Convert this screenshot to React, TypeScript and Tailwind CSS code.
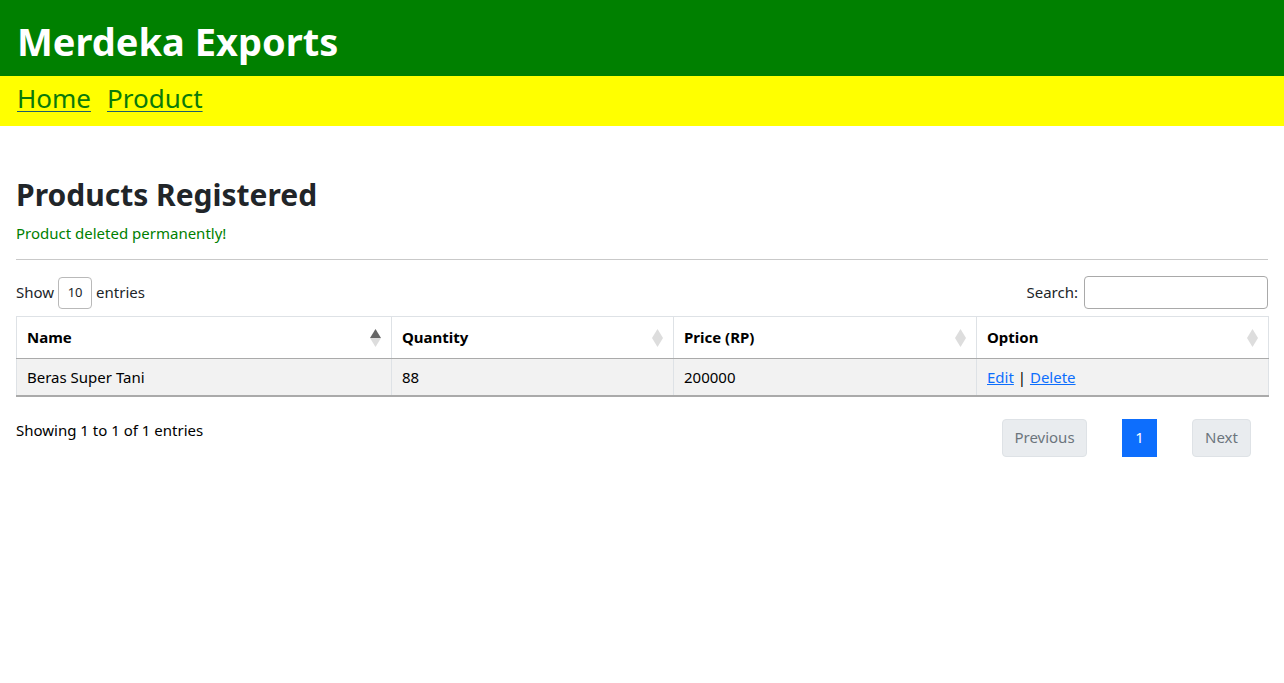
const font = { fontFamily: '"Noto Sans", "Segoe UI", sans-serif' };

function SortIcon({ active = false }: { active?: boolean }) {
  return (
    <span className="absolute right-[10px] top-1/2 flex -translate-y-1/2 flex-col items-center">
      <svg width="11" height="9" viewBox="0 0 11 9" className="block">
        <path d="M5.5 0 L11 9 L0 9 Z" fill={active ? '#666666' : '#dddddd'} />
      </svg>
      <svg width="11" height="9" viewBox="0 0 11 9" className="block">
        <path d="M0 0 L11 0 L5.5 9 Z" fill="#dddddd" />
      </svg>
    </span>
  );
}

const columns = [
  { label: 'Name', width: 'w-[375px]', active: true },
  { label: 'Quantity', width: 'w-[282px]' },
  { label: 'Price (RP)', width: 'w-[303px]' },
  { label: 'Option', width: 'w-[292px]' },
];

export default function App() {
  return (
    <div className="min-h-[683px] bg-white text-[#212529]" style={font}>
      <header className="flex h-[76px] items-center bg-[#008000] px-[17px] pt-[6px]">
        <h1 className="text-[38px] font-bold leading-none text-white">Merdeka Exports</h1>
      </header>
      <nav className="flex h-[50px] items-center gap-[16px] bg-[#ffff00] px-[17px] pb-[6px]">
        <a href="#" className="text-[26px] leading-none text-[#0a7a0a] underline decoration-[#1e5f6a] decoration-1 underline-offset-[3px]">
          Home
        </a>
        <a href="#" className="text-[26px] leading-none text-[#0a7a0a] underline decoration-[#1e5f6a] decoration-1 underline-offset-[3px]">
          Product
        </a>
      </nav>

      <main className="px-[16px] pt-[50px]">
        <h2 className="text-[30px] font-bold leading-[38px] text-[#212529]">Products Registered</h2>
        <p className="mt-[7px] text-[15px] leading-[24px] text-[#008000]">Product deleted permanently!</p>
        <hr className="mt-[14px] border-t border-[#c9c9c9]" />

        <div className="mt-[16px] flex items-center justify-between text-[15px]">
          <div className="flex items-center gap-[4px]">
            <span>Show</span>
            <span className="flex h-[32px] w-[34px] items-center justify-center rounded-[4px] border border-[#b9b9b9] text-[13px]">
              10
            </span>
            <span>entries</span>
          </div>
          <div className="flex items-center gap-[6px]">
            <span>Search:</span>
            <span className="h-[33px] w-[184px] rounded-[4px] border border-[#a9a9a9]" />
          </div>
        </div>

        <table className="mt-[7px] w-full table-fixed border-collapse text-[15px]">
          <thead>
            <tr>
              {columns.map((c) => (
                <th
                  key={c.label}
                  className={`${c.width} relative h-[42px] border border-b-[#aaaaaa] border-[#dee2e6] px-[10px] text-left font-bold text-black`}
                >
                  {c.label}
                  <SortIcon active={c.active} />
                </th>
              ))}
            </tr>
          </thead>
          <tbody>
            <tr className="h-[37px] border-b-2 border-[#aaaaaa] bg-[#f2f2f2] text-black">
              <td className="border-x border-[#dee2e6] px-[10px]">Beras Super Tani</td>
              <td className="border-x border-[#dee2e6] px-[10px]">88</td>
              <td className="border-x border-[#dee2e6] px-[10px]">200000</td>
              <td className="border-x border-[#dee2e6] px-[10px]">
                <a href="#" className="text-[#0d6efd] underline">Edit</a> |{' '}
                <a href="#" className="text-[#0d6efd] underline">Delete</a>
              </td>
            </tr>
          </tbody>
        </table>

        <div className="mt-[21px] flex items-start justify-between text-[15px]">
          <p className="leading-[24px] text-black">Showing 1 to 1 of 1 entries</p>
          <div className="mr-[17px] mt-[1px] flex items-center gap-[35px]">
            <span className="flex h-[38px] w-[85px] items-center justify-center rounded-[4px] border border-[#dee2e6] bg-[#e9ecef] text-[#6c757d]">
              Previous
            </span>
            <span className="flex h-[38px] w-[35px] items-center justify-center bg-[#0d6efd] text-white">1</span>
            <span className="flex h-[38px] w-[59px] items-center justify-center rounded-[4px] border border-[#dee2e6] bg-[#e9ecef] text-[#6c757d]">
              Next
            </span>
          </div>
        </div>
      </main>
    </div>
  );
}
